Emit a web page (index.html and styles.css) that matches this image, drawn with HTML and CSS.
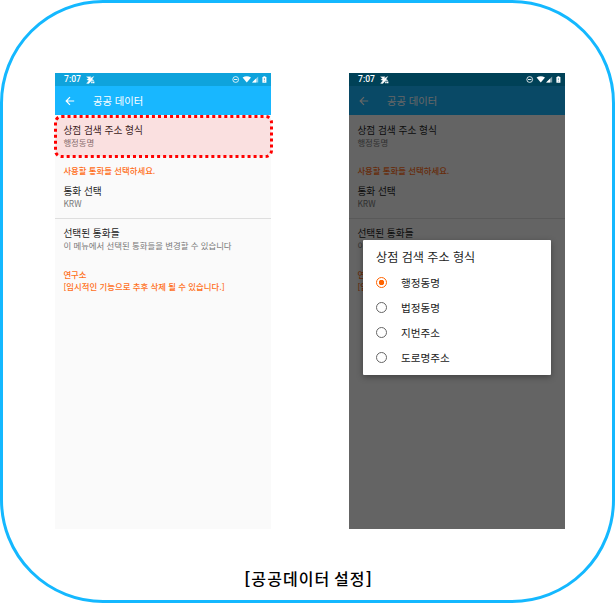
FILE: index.html
```html
<!DOCTYPE html>
<html lang="ko">
<head>
<meta charset="utf-8">
<title>공공데이터 설정</title>
<link rel="stylesheet" href="styles.css">
</head>
<body>
<svg width="0" height="0" class="defs">
  <symbol id="leaf" viewBox="0 0 9 8"><path d="M.5.8H5L4 2.6 7.8.4 6 3.2 8 4.4 5.4 4.8 3 7.4H.6L3 4.4.8 3.7 2.6 2.5Z" fill="#fff" stroke="#fff" stroke-width=".3"/><path d="M5.2 5.5h1.5v1.8H5.2z M7 5.6h1.4v1.7H7z" fill="#fff"/></symbol>
  <symbol id="status" viewBox="0 0 36 9">
    <circle cx="4.7" cy="4.5" r="2.9" fill="none" stroke="#fff" stroke-width=".8"/><path d="M3 4.5h3.4" stroke="#fff" stroke-width=".9"/>
    <path d="M11.6 2.5Q15.8-.1 20 2.5L15.8 7.4Z" fill="#fff"/>
    <path d="M27.2 1.4v6.1h-6.1Z" fill="#fff" fill-opacity=".5"/><path d="M25.2 3.4v4.1h-4.1Z" fill="#fff"/>
    <path d="M31.4 2h1V1.2h2V2h1v5.7h-4z" fill="#fff"/><path d="M33.4 3.2v1.9M33.4 5.8v.8" stroke="#055a80" stroke-opacity=".7" stroke-width=".8"/>
  </symbol>
  <symbol id="back" viewBox="0 0 10 10"><path d="M9.2 5H1.4M5 1.2 1.2 5 5 8.8" fill="none" stroke="#fff" stroke-width="1.2"/></symbol>
</svg>
<main class="frame">
  <div class="phones">
    <section class="phone">
      <header class="statusbar"><span class="time">7:07</span><svg class="leaf"><use href="#leaf"/></svg><svg class="icons"><use href="#status"/></svg></header>
      <div class="appbar"><svg class="back"><use href="#back"/></svg><h1>공공 데이터</h1></div>
      <div class="list">
        <div class="item first"><p class="name">상점 검색 주소 형식</p><p class="value">행정동명</p></div>
        <div class="item currency"><p class="note">사용할 통화들 선택하세요.</p><p class="name">통화 선택</p><p class="value">KRW</p></div>
        <div class="item selected"><p class="name">선택된 통화들</p><p class="value">이 메뉴에서 선택된 통화들을 변경할 수 있습니다</p></div>
        <div class="item lab"><p class="note">연구소</p><p class="note">[임시적인 기능으로 추후 삭제 될 수 있습니다.]</p></div>
      </div>
      <svg class="highlight" viewBox="0 0 219 43"><rect x="1.5" y="1.5" width="216" height="40" rx="6" fill="#f00" fill-opacity=".1" stroke="#ff0000" stroke-width="3" stroke-dasharray="3 3.03"/></svg>
    </section>
    <section class="phone">
      <header class="statusbar dark"><span class="time">7:07</span><svg class="leaf"><use href="#leaf"/></svg><svg class="icons"><use href="#status"/></svg></header>
      <div class="appbar"><svg class="back"><use href="#back"/></svg><h1>공공 데이터</h1></div>
      <div class="list">
        <div class="item first"><p class="name">상점 검색 주소 형식</p><p class="value">행정동명</p></div>
        <div class="item currency"><p class="note">사용할 통화들 선택하세요.</p><p class="name">통화 선택</p><p class="value">KRW</p></div>
        <div class="item selected"><p class="name">선택된 통화들</p><p class="value">이</p></div>
        <div class="item lab"><p class="note">연구소</p><p class="note">[임</p></div>
      </div>
      <div class="scrim"></div>
      <div class="dialog">
        <h2>상점 검색 주소 형식</h2>
        <div class="option"><i class="radio on"></i><span>행정동명</span></div>
        <div class="option"><i class="radio"></i><span>법정동명</span></div>
        <div class="option"><i class="radio"></i><span>지번주소</span></div>
        <div class="option"><i class="radio"></i><span>도로명주소</span></div>
      </div>
    </section>
  </div>
  <p class="caption"><b>[</b>공공데이터 설정<b>]</b></p>
</main>
</body>
</html>
```
FILE: styles.css
```css
* { box-sizing: border-box; margin: 0; padding: 0; }
body { background: #fff; font-family: "Noto Sans CJK KR", sans-serif; overflow: hidden; }
.defs { position: absolute; }
.frame { width: 615px; height: 603px; border: 3px solid #14b8ff; border-radius: 103px; padding: 70px 47px 0 52px; }
.phones { display: flex; gap: 78px; }
.phone { position: relative; flex: none; width: 216px; height: 456px; background: #fafafa; }
.statusbar { display: flex; align-items: center; height: 13px; padding: 0 4px 0 9px; background: #0fa3dc; color: #fff; }
.statusbar.dark { position: relative; z-index: 1; background: #004157; }
.time { width: 17px; font: 500 8.6px/13px Roboto, sans-serif; }
.leaf { width: 9px; height: 8px; margin-left: 5px; }
.icons { width: 36px; height: 9px; margin-left: auto; }
.appbar { display: flex; align-items: center; height: 29px; padding-left: 10px; background: #18b7ff; color: #fff; }
.back { width: 10px; height: 10px; }
.appbar h1 { margin-left: 18px; font-size: 10.3px; line-height: 27px; font-weight: 400; }
.item { padding-left: 8.4px; white-space: nowrap; }
.first { height: 49px; padding-top: 8.5px; }
.currency { height: 55px; border-bottom: 1px solid #dedede; }
.selected { height: 49px; padding-top: 8px; }
.name { font-size: 9.7px; line-height: 13px; color: #242424; }
.value { font-size: 8.4px; line-height: 12px; color: #777; margin-top: -1px; }
.note { font-size: 8.4px; line-height: 12px; color: #ff6f1a; font-weight: 500; }
.currency .name { margin-top: 9px; }
.scrim { position: absolute; inset: 0; background: rgba(0,0,0,.6); }
.highlight { position: absolute; left: -1px; top: 42px; width: 219px; height: 43px; }
.dialog { position: absolute; left: 14px; top: 167px; width: 188px; height: 135px; padding: 7px 13px; background: #fff; border-radius: 1px; box-shadow: 0 2px 6px rgba(0,0,0,.35); color: #222; }
.dialog h2 { font-size: 12.1px; line-height: 20px; font-weight: 400; margin-bottom: 2.6px; }
.option { display: flex; align-items: center; height: 25.2px; font-size: 10.6px; }
.radio { width: 11px; height: 11px; border: 1.2px solid #666; border-radius: 50%; margin-right: 14px; }
.radio.on { border-color: #ff6400; background: radial-gradient(circle, #ff6400 2.5px, transparent 3px); }
.caption { margin-top: 37px; padding-right: 3px; text-align: center; font-size: 16px; line-height: 24px; font-weight: 500; letter-spacing: 1.1px; word-spacing: -2px; color: #000; }
```
